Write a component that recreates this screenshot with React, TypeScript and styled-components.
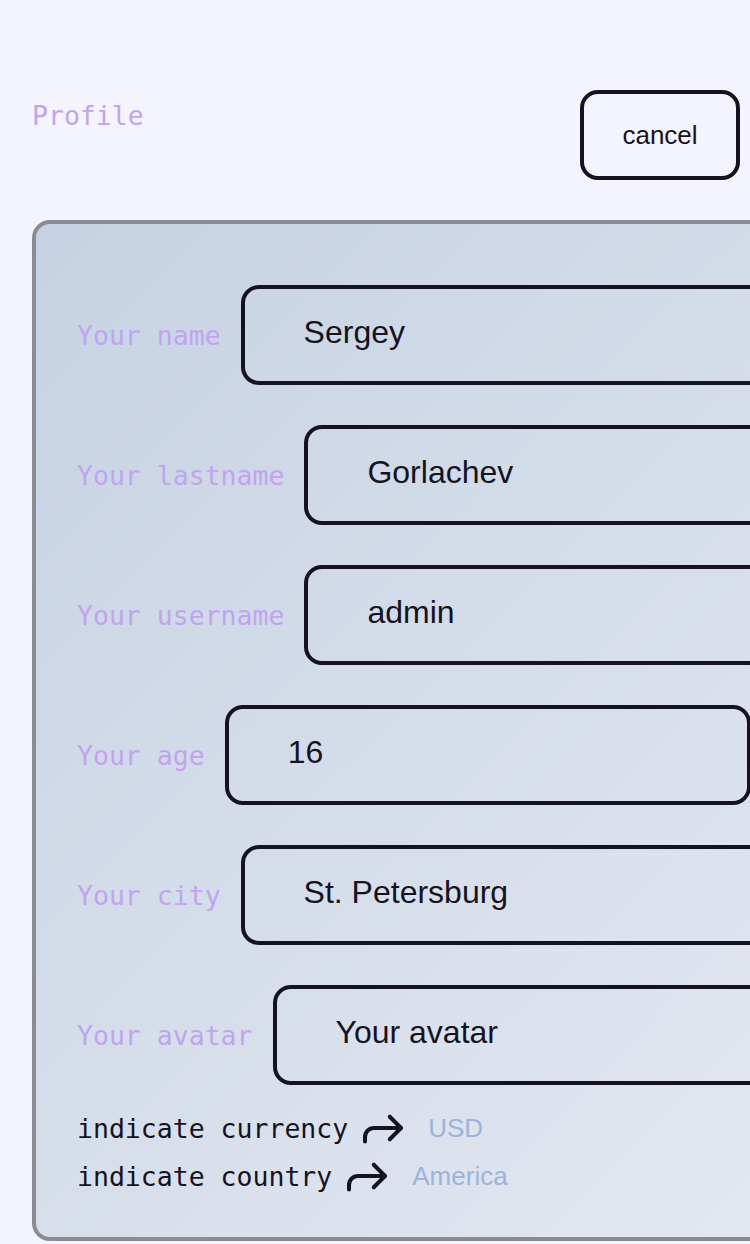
import React from 'react';
import styled, { createGlobalStyle } from 'styled-components';
import { Forward } from 'lucide-react';

const fields = [
  { label: 'Your name', value: 'Sergey' },
  { label: 'Your lastname', value: 'Gorlachev' },
  { label: 'Your username', value: 'admin' },
  { label: 'Your age', value: '16' },
  { label: 'Your city', value: 'St. Petersburg' },
  { label: 'Your avatar', value: 'Your avatar' },
];

const extras = [
  { label: 'indicate currency', value: 'USD' },
  { label: 'indicate country', value: 'America' },
];

const App: React.FC = () => {
  return (
    <Page>
      <GlobalStyle />
      <Header>
        <Title>Profile</Title>
        <CancelButton>cancel</CancelButton>
      </Header>
      <Card>
        <Fields>
          {fields.map((field) => (
            <Row key={field.label}>
              <Label>{field.label}</Label>
              <Input defaultValue={field.value} />
            </Row>
          ))}
        </Fields>
        <Extras>
          {extras.map((extra) => (
            <ExtraLine key={extra.label}>
              <ExtraLabel>{extra.label}</ExtraLabel>
              <ArrowIcon size={54} strokeWidth={1.8} />
              <ExtraValue>{extra.value}</ExtraValue>
            </ExtraLine>
          ))}
        </Extras>
      </Card>
    </Page>
  );
};

const GlobalStyle = createGlobalStyle`
  html, body {
    margin: 0;
    background: #f3f4fd;
    overflow: hidden;
  }
`;

const Page = styled.div`
  padding: 90px 10px 0 32px;
  width: 1000px;
`;

const Header = styled.div`
  display: flex;
  justify-content: space-between;
  align-items: flex-start;
  width: 708px;
`;

const Title = styled.h1`
  margin: 10px 0 0;
  font-family: 'DejaVu Sans Mono', monospace;
  font-size: 26.5px;
  line-height: 32px;
  font-weight: 400;
  color: #c3a3ef;
`;

const CancelButton = styled.button`
  box-sizing: border-box;
  width: 160px;
  height: 90px;
  border: 4px solid #15131f;
  border-radius: 18px;
  background: transparent;
  font-family: 'Liberation Sans', Arial, sans-serif;
  font-size: 26px;
  color: #15131f;
  cursor: pointer;
`;

const Card = styled.div`
  box-sizing: border-box;
  margin-top: 40px;
  width: 900px;
  padding: 61px 40px 37px 41px;
  border: 4px solid #8b8b93;
  border-radius: 18px;
  background: linear-gradient(135deg, #c6d2e3 0%, #d6deea 50%, #e6e9f3 100%);
`;

const Fields = styled.div`
  display: flex;
  flex-direction: column;
  gap: 40px;
`;

const Row = styled.div`
  display: flex;
  align-items: center;
  gap: 20px;
`;

const Label = styled.label`
  font-family: 'DejaVu Sans Mono', monospace;
  font-size: 26.5px;
  color: #c3a3ef;
  white-space: nowrap;
`;

const Input = styled.input`
  box-sizing: border-box;
  width: 526px;
  height: 100px;
  padding: 0 0 6px 59px;
  border: 4px solid #15131f;
  border-radius: 18px;
  background: transparent;
  font-family: 'Liberation Sans', Arial, sans-serif;
  font-size: 32px;
  color: #15131f;
  outline: none;
`;

const Extras = styled.div`
  margin-top: 19px;
  display: flex;
  flex-direction: column;
`;

const ExtraLine = styled.div`
  display: flex;
  align-items: center;
  height: 48px;
`;

const ExtraLabel = styled.span`
  font-family: 'DejaVu Sans Mono', monospace;
  font-size: 26.5px;
  color: #15131f;
  white-space: nowrap;
`;

const ArrowIcon = styled(Forward)`
  display: block;
  flex-shrink: 0;
  margin: 0 18px 0 8px;
  color: #15131f;
`;

const ExtraValue = styled.span`
  font-family: 'Liberation Sans', Arial, sans-serif;
  font-size: 26px;
  color: #9db3d9;
`;

export default App;
